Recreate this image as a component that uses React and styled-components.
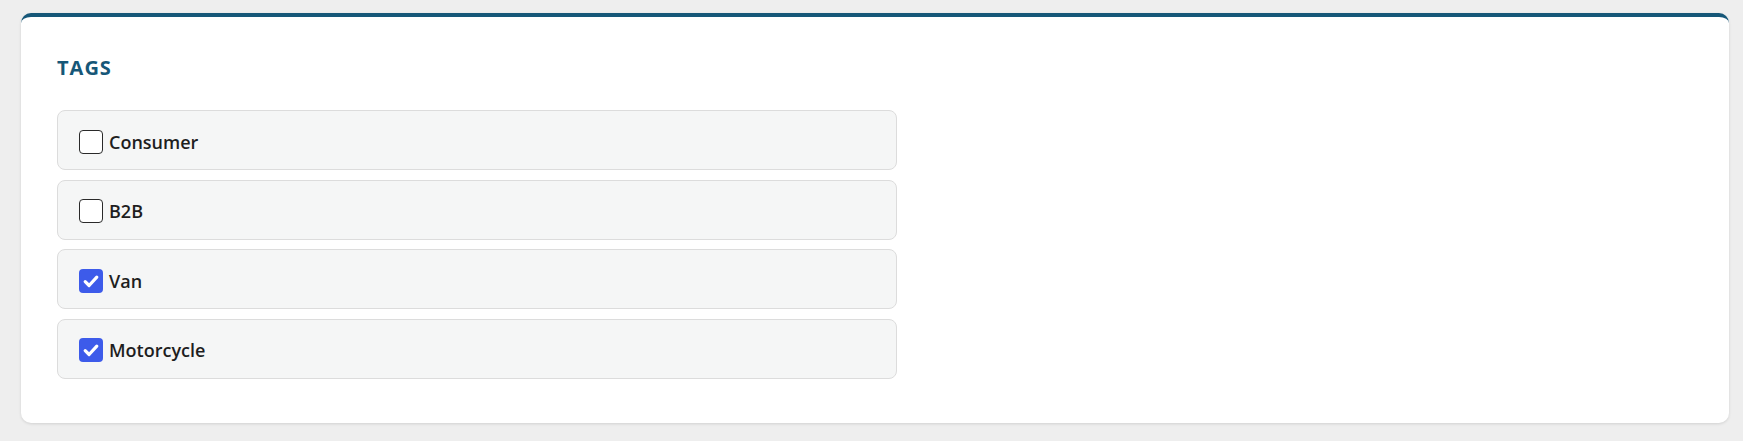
import React, { useState } from 'react';
import styled, { createGlobalStyle } from 'styled-components';

const GlobalStyle = createGlobalStyle`
  html, body { margin: 0; padding: 0; background: #eeeeee; }
  body { font-family: "Open Sans", "Noto Sans", sans-serif; }
`;

const Page = styled.div`
  padding: 13px 14px 18px 21px;
`;

const Card = styled.section`
  background: #fff;
  border-top: 4px solid #165778;
  border-radius: 10px;
  box-shadow: 0 1px 3px rgba(0, 0, 0, 0.12);
  padding: 37px 36px 42px;
  height: 410px;
  box-sizing: border-box;
`;

const Title = styled.h3`
  margin: 0 0 28px 0;
  font-size: 20px;
  font-weight: 700;
  letter-spacing: 1px;
  color: #165778;
  line-height: 28px;
`;

const List = styled.div`
  display: flex;
  flex-direction: column;
  gap: 9.5px;
  width: 840px;
`;

const Row = styled.label`
  display: flex;
  align-items: center;
  gap: 6px;
  height: 60px;
  box-sizing: border-box;
  padding: 3px 21px 0;
  background: #f5f6f6;
  border: 1px solid #dcdcdc;
  border-radius: 8px;
  cursor: pointer;
`;

const Box = styled.span`
  width: 24px;
  height: 24px;
  box-sizing: border-box;
  border-radius: 4px;
  border: ${p => p.$checked ? 'none' : '1px solid #2a2a2a'};
  background: ${p => p.$checked ? '#3d5bea' : '#fff'};
  display: flex;
  align-items: center;
  justify-content: center;
  flex-shrink: 0;
`;

const Label = styled.span`
  font-size: 18px;
  font-weight: 600;
  color: #1e1e1e;
`;

const tags = [
  { id: 'consumer', name: 'Consumer', checked: false },
  { id: 'b2b', name: 'B2B', checked: false },
  { id: 'van', name: 'Van', checked: true },
  { id: 'moto', name: 'Motorcycle', checked: true }
];

export default function App() {
  const [state, setState] = useState(tags);

  const toggle = id => setState(s => s.map(t => t.id === id ? { ...t, checked: !t.checked } : t));

  return (
    <Page>
      <GlobalStyle />
      <Card>
        <Title>TAGS</Title>
        <List>
          {state.map(t => (
            <Row key={t.id} onClick={() => toggle(t.id)}>
              <Box $checked={t.checked}>
                {t.checked && (
                  <svg width="20" height="20" viewBox="0 0 20 20">
                    <path d="M4.2 10.6l3.9 3.9L15.8 6.2" fill="none" stroke="#fff" strokeWidth="3.2" strokeLinecap="round" strokeLinejoin="round" />
                  </svg>
                )}
              </Box>
              <Label>{t.name}</Label>
            </Row>
          ))}
        </List>
      </Card>
    </Page>
  );
}
